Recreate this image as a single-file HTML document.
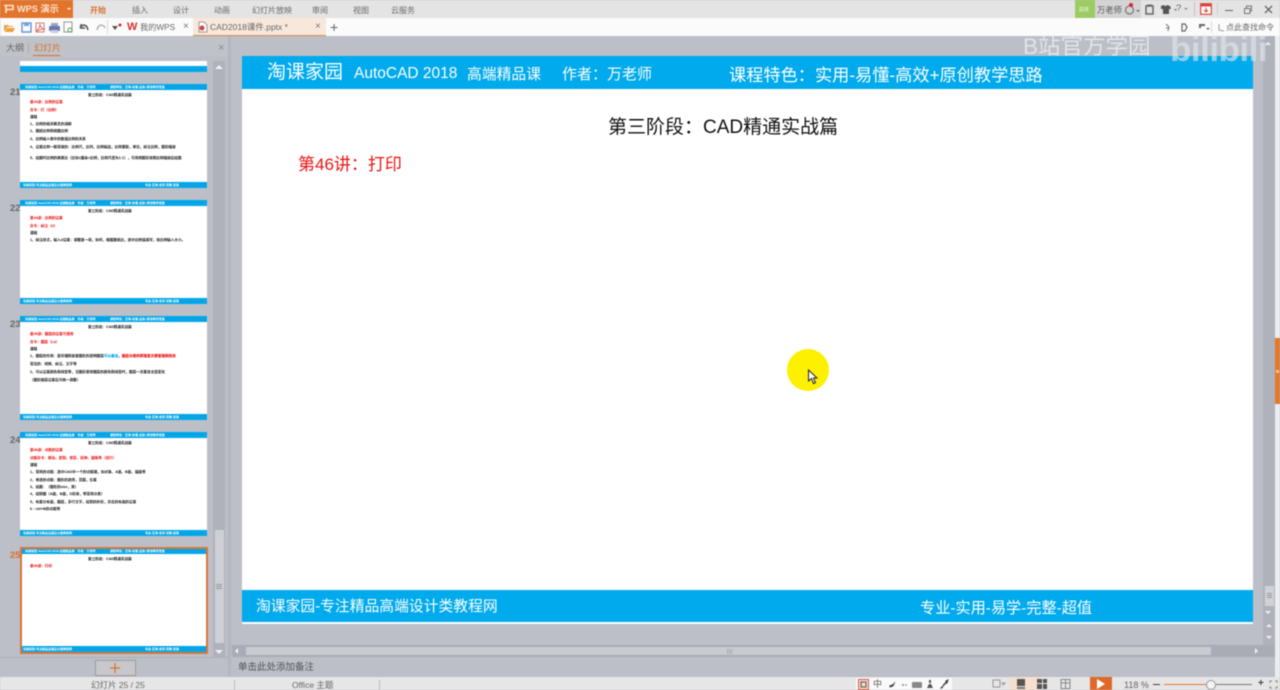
<!DOCTYPE html>
<html lang="zh"><head><meta charset="utf-8"><title>WPS 演示</title>
<style>
html,body{margin:0;padding:0}
body{width:1280px;height:690px;overflow:hidden;position:relative;background:#bcbfc7;font-family:"Liberation Sans","Noto Sans CJK SC",sans-serif;color:#444}
#r{position:absolute;left:0;top:0;width:1280px;height:690px;overflow:hidden;filter:blur(.4px)}
#r div,#r span,#r svg{position:absolute}
span{white-space:nowrap}
.m{font-size:8px;color:#6a6a6a;top:5px}
.c,.th{font-family:"Liberation Sans","Noto Sans CJK TC",sans-serif}
.th{left:20px;width:187px;height:104px;background:#fff;overflow:hidden}
.th .h{left:0;top:0;width:187px;height:6px;background:#00a6e8}
.th .f{left:0;bottom:0;width:187px;height:6px;background:#00a6e8}
.th span{font-size:3.6px;line-height:5px;color:#111;font-weight:bold}
.th .w{color:#fff;font-size:3px;line-height:6px;top:0;font-weight:bold}
.th .r{color:#f00000}
.n{left:10px;font-size:9.5px;color:#666;font-weight:bold}
.wt{color:#fff}
</style></head><body><div id="r">
<!-- title bar -->
<div style="left:0;top:0;width:1280px;height:18px;background:#e4e4e4"></div>
<div style="left:0;top:0;width:73px;height:18px;background:#e2742c"></div>
<svg style="left:3px;top:4px" width="12" height="10" viewBox="0 0 12 10"><path d="M1 1.500h9v4H3M3 1.500V9" fill="none" stroke="#fbe3cf" stroke-width="1.600"/></svg>
<span style="left:17px;top:3px;font-size:9.200px;line-height:12px;color:#fbe3cf;font-weight:bold">WPS 演示</span>
<div style="left:67px;top:8px;border:2.5px solid transparent;border-top-color:#fff;border-bottom:0"></div>
<span class="m" style="left:90px;color:#d9702c;font-weight:bold">开始</span>
<span class="m" style="left:132px">插入</span>
<span class="m" style="left:173px">设计</span>
<span class="m" style="left:214px">动画</span>
<span class="m" style="left:252px">幻灯片放映</span>
<span class="m" style="left:312px">审阅</span>
<span class="m" style="left:353px">视图</span>
<span class="m" style="left:391px">云服务</span>
<div style="left:1075px;top:0;width:20px;height:18px;background:#9ccb63"></div>
<span style="left:1079px;top:6px;font-size:5px;color:#e8f5d8">副席</span>
<div style="left:1095px;top:0;width:46px;height:18px;background:#d4d4d4"></div>
<span style="left:1097px;top:4px;font-size:8.300px;color:#555">万老师</span>
<svg style="left:1122px;top:2px" width="20" height="14" viewBox="0 0 20 14"><circle cx="7.5" cy="8" r="4" fill="none" stroke="#777" stroke-width="1.2"/><circle cx="9" cy="3" r="2" fill="#e3202a"/><path d="M14 8h4l-2 2z" fill="#666"/></svg>
<svg style="left:1144px;top:3px" width="70" height="13" viewBox="0 0 70 13"><rect x="2" y="3" width="7" height="8" fill="none" stroke="#666" stroke-width="1.5"/><rect x="3" y="1.500" width="5" height="2" fill="#666"/><path d="M17 3l3-1 1 1h1l1-1 3 1 1 3h-2v5h-6V6h-2z" fill="#555"/><path d="M30 6h3l-1.500 2z" fill="#777"/></svg>
<span style="left:1176px;top:3px;font-size:9.5px;color:#666">?</span>
<div style="left:1184px;top:8px;border:2px solid transparent;border-top-color:#888;border-bottom:0"></div>
<div style="left:1194px;top:2px;width:1px;height:14px;background:#c4c4c4"></div>
<svg style="left:1200px;top:3px" width="12" height="12" viewBox="0 0 12 12"><rect x=".7" y=".7" width="10.600" height="10.600" fill="#fff" stroke="#d9463c" stroke-width="1.200"/><rect x="1" y="1" width="10" height="2.500" fill="#d9463c"/><path d="M6 4.500v4M4 7l2 2 2-2" stroke="#d9463c" fill="none"/></svg>
<div style="left:1217px;top:3px;width:1px;height:12px;background:#cfcfcf"></div>
<div style="left:1225px;top:10px;width:8px;height:1px;background:#666"></div>
<svg style="left:1243px;top:5px" width="10" height="9" viewBox="0 0 10 9"><path d="M1.500 3.500h5.500v5H1.500zM3.500 3V1h5v5H7" fill="none" stroke="#777"/></svg>
<svg style="left:1264px;top:5px" width="9" height="9" viewBox="0 0 9 9"><path d="M1 1l7 7M8 1L1 8" stroke="#666" stroke-width="1.300"/></svg>
<!-- tab row -->
<div style="left:0;top:18px;width:1280px;height:18px;background:#fbfbfb"></div>
<svg style="left:3px;top:21px" width="120" height="13" viewBox="0 0 120 13"><path d="M1 10V4h4l1 1h4v1H4l-2 4zM2 11l2-4h8l-2 4z" fill="#eda03c"/><rect x="19" y="2" width="9" height="9" fill="none" stroke="#5d8bd3" stroke-width="1.300"/><rect x="21" y="2" width="5" height="3" fill="#7ba0dc"/><rect x="33" y="2" width="8" height="9" fill="none" stroke="#d77a74"/><path d="M34 9c2-1 3-4 3-6 0 3 2 5 5 5-3 0-6 1-8 2z" fill="none" stroke="#d0534c" stroke-width=".8"/><rect x="46" y="5" width="11" height="5" rx="1" fill="#6d77ad"/><rect x="48" y="2" width="7" height="3" fill="#9ca3c8"/><rect x="48" y="9" width="7" height="3" fill="#c9cde0"/><rect x="61" y="1" width="8" height="10" fill="none" stroke="#8b9c8a"/><circle cx="67" cy="9" r="2" fill="none" stroke="#5aa05a"/><path d="M77 7c1-3 5-4 7-1l1 3M78 3v4h4" fill="none" stroke="#555" stroke-width="1.500"/><path d="M102 7c-1-3-5-4-7-1l-1 3" fill="none" stroke="#aaa" stroke-width="1.300"/></svg>
<div style="left:107px;top:20px;width:1px;height:14px;background:#ddd"></div>
<svg style="left:112px;top:23px" width="10" height="9" viewBox="0 0 10 9"><path d="M0 3h6L3 7z" fill="#555"/><circle cx="8" cy="2" r="1.500" fill="#e3202a"/></svg>
<span style="left:127px;top:21px;font-size:11px;line-height:13px;font-weight:bold;color:#d8322e">W</span>
<span style="left:140px;top:22px;font-size:8.200px;line-height:11px;color:#666">我的WPS</span>
<span style="left:183px;top:21px;font-size:10px;line-height:12px;color:#777">×</span>
<div style="left:193px;top:18px;width:133px;height:17px;background:#f8e8dc;border-bottom:1px solid #e08a50"></div>
<svg style="left:197px;top:21px" width="11" height="12" viewBox="0 0 11 12"><path d="M2 1h5l3 3v7H2z" fill="#fff" stroke="#999"/><circle cx="5" cy="7" r="2.500" fill="#d0473c"/></svg>
<span style="left:210px;top:21px;font-size:8.500px;line-height:12px;color:#666">CAD2018课件.pptx *</span>
<span style="left:315px;top:21px;font-size:10px;line-height:12px;color:#777">×</span>
<span style="left:330px;top:19px;font-size:14px;line-height:16px;color:#666">+</span>
<svg style="left:1163px;top:22px" width="50" height="11" viewBox="0 0 50 11"><path d="M3 2l3 3-1 4M3 6h3" stroke="#777" fill="none"/><path d="M19 2h3l2 3-2 4h-3z" fill="none" stroke="#666" stroke-width="1.200"/><path d="M36 2h6v2h-4v2h-2zM43 6h4l-2 2z" fill="#666"/></svg>
<div style="left:1211px;top:21px;width:1px;height:12px;background:#ddd"></div>
<svg style="left:1217px;top:23px" width="9" height="10" viewBox="0 0 9 10"><path d="M2 1v6l5 1" fill="none" stroke="#999"/></svg>
<span style="left:1226px;top:22px;font-size:8px;line-height:11px;color:#666">点此查找命令</span>
<!-- left panel header -->
<div style="left:0;top:36px;width:228px;height:20px;background:#c0c2c9"></div>
<span style="left:6px;top:43px;font-size:9px;line-height:11px;color:#666">大纲</span>
<div style="left:28px;top:43px;width:1px;height:10px;background:#aaa"></div>
<span style="left:34px;top:43px;font-size:9px;line-height:11px;color:#d9702c">幻灯片</span>
<div style="left:33px;top:55px;width:27px;height:1px;background:#d9702c"></div>
<span style="left:218px;top:42px;font-size:11px;line-height:12px;color:#888">×</span>
<!-- top partial -->
<div style="left:20px;top:61px;width:187px;height:5px;background:#fff"></div>
<div style="left:20px;top:66px;width:187px;height:6px;background:#00a6e8"></div>
<!-- thumb 21 -->
<span class="n" style="top:87px">21</span>
<div class="th" style="top:84px"><div class="h"></div><span class="w" style="left:5px">淘课家园 AutoCAD 2018 高端精品课　作者：万老师</span><span class="w" style="left:90px">课程特色：实用-易懂-高效+原创教学思路</span>
<span style="left:68px;top:9px">第三阶段：CAD精通实战篇</span>
<span class="r" style="left:10px;top:16px">第43讲：比例的设置</span><span class="r" style="left:10px;top:24px">命令：打（比例）</span>
<span style="left:10px;top:31px">课程</span><span style="left:10px;top:38px">1、比例的相关概念的讲解</span><span style="left:10px;top:45px">2、图纸比例和视图比例</span><span style="left:10px;top:53px">3、比例输入框中的数值比例的关系</span>
<span style="left:10px;top:61px">4、设置比例一般常规的：比例尺，比列，比例输出，比例更新，单位，标注比例，图形缩放</span>
<span style="left:10px;top:72px">5、绘图时比例的换算比（比如1厘米=比例，比例尺度为1:1），可用把图形按照比例缩放后绘图</span>
<div class="f"><span class="w" style="left:3px">淘课家园-专注精品高端设计类教程网</span><span class="w" style="left:125px">专业-实用-易学-完整-超值</span></div></div>
<!-- thumb 22 -->
<span class="n" style="top:203px">22</span>
<div class="th" style="top:200px"><div class="h"></div><span class="w" style="left:5px">淘课家园 AutoCAD 2018 高端精品课　作者：万老师</span><span class="w" style="left:90px">课程特色：实用-易懂-高效+原创教学思路</span>
<span style="left:68px;top:9px">第三阶段：CAD精通实战篇</span>
<span class="r" style="left:10px;top:16px">第44讲：比例的设置</span><span class="r" style="left:10px;top:24px">命令：标注（d）</span>
<span style="left:10px;top:31px">课程</span><span style="left:10px;top:38px">1、标注样式，输入d设置：调整第一项，如何，根据图纸比，选中比例值填写，按比例输入大小。</span>
<div class="f"><span class="w" style="left:3px">淘课家园-专注精品高端设计类教程网</span><span class="w" style="left:125px">专业-实用-易学-完整-超值</span></div></div>
<!-- thumb 23 -->
<span class="n" style="top:319px">23</span>
<div class="th" style="top:316px"><div class="h"></div><span class="w" style="left:5px">淘课家园 AutoCAD 2018 高端精品课　作者：万老师</span><span class="w" style="left:90px">课程特色：实用-易懂-高效+原创教学思路</span>
<span style="left:68px;top:9px">第三阶段：CAD精通实战篇</span>
<span class="r" style="left:10px;top:16px">第45讲：图层的设置与使用</span><span class="r" style="left:10px;top:24px">命令：图层（La）</span>
<span style="left:10px;top:31px">课程</span><span style="left:10px;top:38px">1、图层的作用：是存储和放置图形的透明图层<b style="color:#00a6e8">可以叠加</b>，<b style="color:#f00000">图层分类的原理是方便管理和修改</b></span>
<span style="left:10px;top:46px">常见的：线框、标注、文字等</span><span style="left:10px;top:54px">2、可以设置颜色和线型等，当图形使用图层的颜色和线型时，图层一次更改全部变化</span><span style="left:10px;top:62px">（图形随层设置后可统一调整）</span>
<div class="f"><span class="w" style="left:3px">淘课家园-专注精品高端设计类教程网</span><span class="w" style="left:125px">专业-实用-易学-完整-超值</span></div></div>
<!-- thumb 24 -->
<span class="n" style="top:435px">24</span>
<div class="th" style="top:432px"><div class="h"></div><span class="w" style="left:5px">淘课家园 AutoCAD 2018 高端精品课　作者：万老师</span><span class="w" style="left:90px">课程特色：实用-易懂-高效+原创教学思路</span>
<span style="left:68px;top:9px">第三阶段：CAD精通实战篇</span>
<span class="r" style="left:10px;top:16px">第46讲：功能的设置</span><span class="r" style="left:10px;top:24px">功能命令：移动、复制、修剪、延伸、圆角等（自行）</span>
<span style="left:10px;top:31px">课程</span><span style="left:10px;top:38px">1、常用的功能：选中CAD中一个的功能键，如对象、A面、B面、端面等</span><span style="left:10px;top:46px">2、单选的功能：图形的选择，范围，位置</span><span style="left:10px;top:53px">3、绘图：（图形的size，类）</span><span style="left:10px;top:60px">4、绘制图（A面、B面，D形体，等常用分类）</span><span style="left:10px;top:68px">5、布置分布面，图层，多行文字，绘制的外形，并且的布局的设置</span><span style="left:10px;top:75px">6、ctrl+B的功能等</span>
<div class="f"><span class="w" style="left:3px">淘课家园-专注精品高端设计类教程网</span><span class="w" style="left:125px">专业-实用-易学-完整-超值</span></div></div>
<!-- thumb 25 -->
<span class="n" style="top:550px;color:#d9702c">25</span>
<div class="th" style="top:548px"><div class="h"></div><span class="w" style="left:5px">淘课家园 AutoCAD 2018 高端精品课　作者：万老师</span><span class="w" style="left:90px">课程特色：实用-易懂-高效+原创教学思路</span>
<span style="left:68px;top:9px">第三阶段：CAD精通实战篇</span>
<span class="r" style="left:10px;top:16px">第46讲：打印</span>
<div class="f"><span class="w" style="left:3px">淘课家园-专注精品高端设计类教程网</span><span class="w" style="left:125px">专业-实用-易学-完整-超值</span></div></div>
<div style="left:20px;top:547px;width:184px;height:103px;border:2px solid #d8763a"></div>
<!-- left scrollbar -->
<div style="left:213px;top:61px;width:12px;height:597px;background:#afb2ba"></div>
<div style="left:215px;top:530px;width:9px;height:113px;background:#ced0d5"></div>
<div style="left:216px;top:584px;width:6px;height:1px;background:#999;box-shadow:0 2px 0 #999,0 4px 0 #999"></div>
<div style="left:215px;top:65px;border:4px solid transparent;border-bottom-color:#f0f0f0;border-top:0"></div>
<div style="left:215px;top:650px;border:4px solid transparent;border-top-color:#f0f0f0;border-bottom:0"></div>
<div style="left:228px;top:36px;width:3px;height:641px;background:#b4b6be"></div>
<div style="left:0;top:657px;width:228px;height:1px;background:#aeb0b8"></div>
<div style="left:95px;top:660px;width:39px;height:14px;background:#c8c8cc;border:1px solid #a09a98"></div>
<svg style="left:109px;top:662px" width="12" height="12" viewBox="0 0 12 12"><path d="M6 1v10M1 6h10" stroke="#d9702c" stroke-width="1.200"/></svg>
<!-- slide -->
<div style="left:242px;top:56px;width:1011px;height:568px;background:#fff"></div>
<div style="left:242px;top:56px;width:1011px;height:33px;background:#00aaec"></div>
<span class="wt" style="left:267px;top:61px;font-size:19px;line-height:24px">淘课家园</span>
<span class="wt" style="left:354px;top:64px;font-size:15.500px;line-height:20px">AutoCAD 2018</span>
<span class="wt" style="left:467px;top:66px;font-size:14.800px;line-height:18px">高端精品课</span>
<span class="wt c" style="left:562px;top:65px;font-size:15px;line-height:20px">作者：万老师</span>
<span class="wt c" style="left:729px;top:65px;font-size:17.200px;line-height:20px">课程特色：实用-易懂-高效+原创教学思路</span>
<span class="c" style="left:608px;top:116px;font-size:19px;line-height:23px;color:#111">第三阶段：CAD精通实战篇</span>
<span class="c" style="left:298px;top:154px;font-size:17px;line-height:21px;color:#ee1111">第46讲：打印</span>
<div style="left:242px;top:590px;width:1011px;height:32px;background:#00aaec"></div>
<span class="wt" style="left:256px;top:597px;font-size:14.800px;line-height:20px">淘课家园-专注精品高端设计类教程网</span>
<span class="wt" style="left:920px;top:599px;font-size:15.200px;line-height:20px">专业-实用-易学-完整-超值</span>
<!-- highlight + cursor -->
<div style="left:787px;top:349px;width:42px;height:42px;border-radius:50%;background:#fdf000"></div>
<svg style="left:807px;top:369px" width="11" height="16" viewBox="0 0 11 16"><path d="M1.500 1v11l3-2.500 2 5 2-1-2-4.500h3.500z" fill="#fff" stroke="#222"/></svg>
<!-- right scrollbar -->
<div style="left:1263px;top:36px;width:12px;height:610px;background:#afb2ba"></div>
<div style="left:1275px;top:36px;width:5px;height:641px;background:#eceDf0"></div>
<div style="left:1265px;top:586px;width:9px;height:20px;background:#d0d2d7"></div>
<div style="left:1267px;top:593px;width:5px;height:1px;background:#999;box-shadow:0 2px 0 #999,0 4px 0 #999"></div>
<div style="left:1265px;top:42px;border:3.500px solid transparent;border-bottom-color:#f0f0f0;border-top:0"></div>
<div style="left:1265px;top:611px;border:3.500px solid transparent;border-top-color:#f0f0f0;border-bottom:0"></div>
<div style="left:1266px;top:624px;border:3px solid transparent;border-bottom-color:#f0f0f0;border-top:0"></div>
<div style="left:1266px;top:636px;border:3px solid transparent;border-top-color:#f0f0f0;border-bottom:0"></div>
<div style="left:1275px;top:338px;width:5px;height:66px;background:#e2782c"></div>
<div style="left:1276px;top:370px;width:3px;height:3px;background:#f5c49a"></div>
<!-- horizontal scrollbar -->
<div style="left:232px;top:645px;width:1043px;height:12px;background:#a9acb4"></div>
<div style="left:246px;top:647px;width:965px;height:8px;background:#c9cbd1"></div>
<div style="left:235px;top:648px;border:3.500px solid transparent;border-right-color:#f0f0f0;border-left:0"></div>
<div style="left:1255px;top:648px;border:3.500px solid transparent;border-left-color:#f0f0f0;border-right:0"></div>
<div style="left:727px;top:649px;width:1px;height:5px;background:#aaa;box-shadow:2px 0 0 #aaa,4px 0 0 #aaa"></div>
<!-- notes -->
<span style="left:238px;top:662px;font-size:9.500px;line-height:12px;color:#555">单击此处添加备注</span>
<!-- status bar -->
<div style="left:0;top:677px;width:1280px;height:13px;background:#e6e6e6"></div>
<span style="left:91px;top:680px;font-size:8.500px;line-height:11px;color:#666">幻灯片 25 / 25</span>
<div style="left:234px;top:680px;width:1px;height:10px;background:#bbb"></div>
<span style="left:292px;top:680px;font-size:8.500px;line-height:11px;color:#666">Office 主题</span>
<div style="left:379px;top:680px;width:1px;height:10px;background:#bbb"></div>
<div style="left:856px;top:678px;width:96px;height:12px;background:#fafafa"></div>
<svg style="left:858px;top:679px" width="12" height="11" viewBox="0 0 12 11"><rect x=".5" y=".5" width="10" height="10" fill="#f6d8c8" stroke="#d0604a"/><path d="M3 3h5v5H3z" fill="none" stroke="#555"/></svg>
<span style="left:873px;top:679px;font-size:9px;line-height:11px;color:#555">中</span>
<svg style="left:886px;top:679px" width="66" height="11" viewBox="0 0 66 11"><path d="M3 8c3 1 6-1 6-6-1 3-3 4-5 4z" fill="#444"/><circle cx="17" cy="6" r="1" fill="#888"/><circle cx="20" cy="6" r="1" fill="#aaa"/><rect x="26" y="3" width="10" height="6" rx="1" fill="#888"/><path d="M41 9l2-4h2l2 4zM43 1h2v3h-2z" fill="#555"/><path d="M55 9l4-4 1-3 2-1-1 3-3 1-2 4z" fill="#444" stroke="#444"/></svg>
<svg style="left:992px;top:679px" width="14" height="10" viewBox="0 0 14 10"><path d="M1 1h7v7H1zM10 4h3l-1.500 2z" fill="none" stroke="#999"/></svg>
<div style="left:1010px;top:677px;width:30px;height:13px;background:#f6dfce"></div>
<svg style="left:1016px;top:679px" width="70" height="11" viewBox="0 0 70 11"><path d="M1 0h8v7H1z" fill="#555"/><path d="M1 8h8v2H1z" fill="#777"/><path d="M21 0h5v4h-5zM27 0h4v4h-4zM21 5h5v5h-5zM27 5h4v5h-4z" fill="#555"/><path d="M45 .5h9v9h-9zM49.500 .5v9M45 4h9" fill="none" stroke="#888"/></svg>
<div style="left:1090px;top:677px;width:22px;height:13px;background:#e0692a"></div>
<div style="left:1097px;top:679px;border:5px solid transparent;border-left:8px solid #fff;border-right:0"></div>
<span style="left:1124px;top:680px;font-size:9px;line-height:11px;color:#666">118 %</span>
<div style="left:1153px;top:684px;width:7px;height:1px;background:#444"></div>
<div style="left:1164px;top:684px;width:44px;height:1px;background:#e0793a"></div>
<div style="left:1214px;top:684px;width:38px;height:1px;background:#777"></div>
<div style="left:1206px;top:680px;width:8px;height:8px;border-radius:50%;background:#f4f4f4;border:1px solid #999"></div>
<span style="left:1258px;top:678px;font-size:10px;line-height:12px;color:#444;font-weight:bold">+</span>
<svg style="left:1269px;top:680px" width="9" height="9" viewBox="0 0 9 9"><path d="M1 3V1h2M6 1h2v2M8 6v2H6M3 8H1V6" fill="none" stroke="#888"/></svg>
<!-- watermark -->
<span style="left:1023px;top:34px;font-size:22.500px;line-height:26px;color:rgba(238,240,244,.75)">B站官方学园</span>
<span style="left:1170px;top:30px;font-size:35px;line-height:40px;color:rgba(225,232,238,.62);font-weight:bold;letter-spacing:-.5px">bilibili</span>
</div></body></html>
